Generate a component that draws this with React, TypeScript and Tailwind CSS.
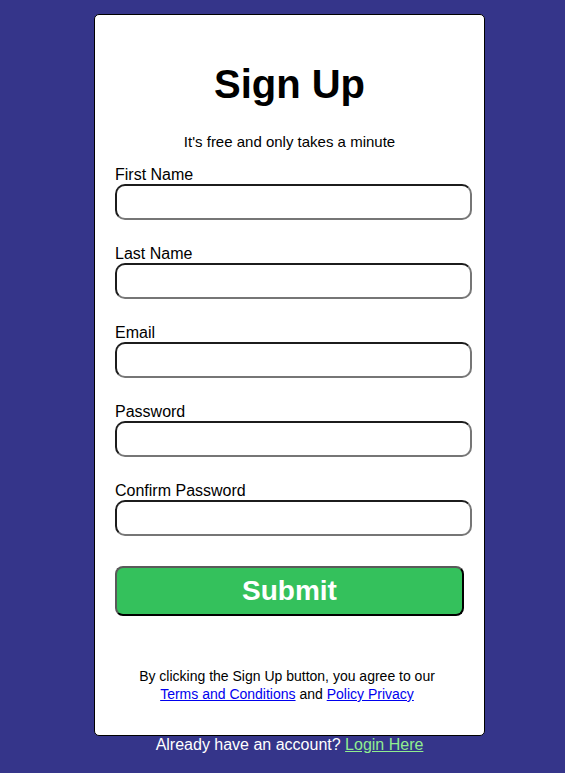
import React from 'react';

const fields = ['First Name', 'Last Name', 'Email', 'Password', 'Confirm Password'];

export default function App() {
  return (
    <div className="min-h-[773px] bg-[#35358a] pt-[14px] font-['Liberation_Sans',Arial,sans-serif]">
      <div className="ml-[94px] w-[391px]">
        <div className="bg-white border border-black rounded-[5px] pt-[46px] pb-[32px] pl-[20px] pr-[12px]">
          <h1 className="text-[40px] leading-[46px] font-bold text-center text-black pr-[8px]">Sign Up</h1>
          <p className="mt-[26px] text-[15px] leading-[18px] text-center text-black pr-[8px]">
            It's free and only takes a minute
          </p>
          <form className="mt-[14px]" onSubmit={(e) => e.preventDefault()}>
            {fields.map((f, i) => (
              <div key={f} className={i > 0 ? 'mt-[24px]' : ''}>
                <label className="block text-[16px] leading-[19px] text-black">{f}</label>
                <input
                  type={f.includes('Password') ? 'password' : 'text'}
                  className="block w-[357px] h-[36px] bg-white rounded-[10px] border-2 border-t-[#1c1c1c] border-l-[#1c1c1c] border-b-[#767676] border-r-[#767676] outline-none"
                />
              </div>
            ))}
            <button
              type="submit"
              className="mt-[30px] w-[349px] h-[50px] bg-[#34c15c] text-white text-[28px] font-bold rounded-[8px] border-2 border-t-[#5a5a5a] border-l-[#5a5a5a] border-b-black border-r-black"
            >
              Submit
            </button>
          </form>
          <p className="mt-[51px] text-[14px] leading-[18px] text-center text-black pr-[13px]">
            By clicking the Sign Up button, you agree to our
            <br />
            <a href="#" className="text-[#0000ee] underline">Terms and Conditions</a> and{' '}
            <a href="#" className="text-[#0000ee] underline">Policy Privacy</a>
          </p>
        </div>
        <p className="text-center text-white text-[16px] leading-[18px]">
          Already have an account?{' '}
          <a href="#" className="text-[#90ee90] underline">Login Here</a>
        </p>
      </div>
    </div>
  );
}
